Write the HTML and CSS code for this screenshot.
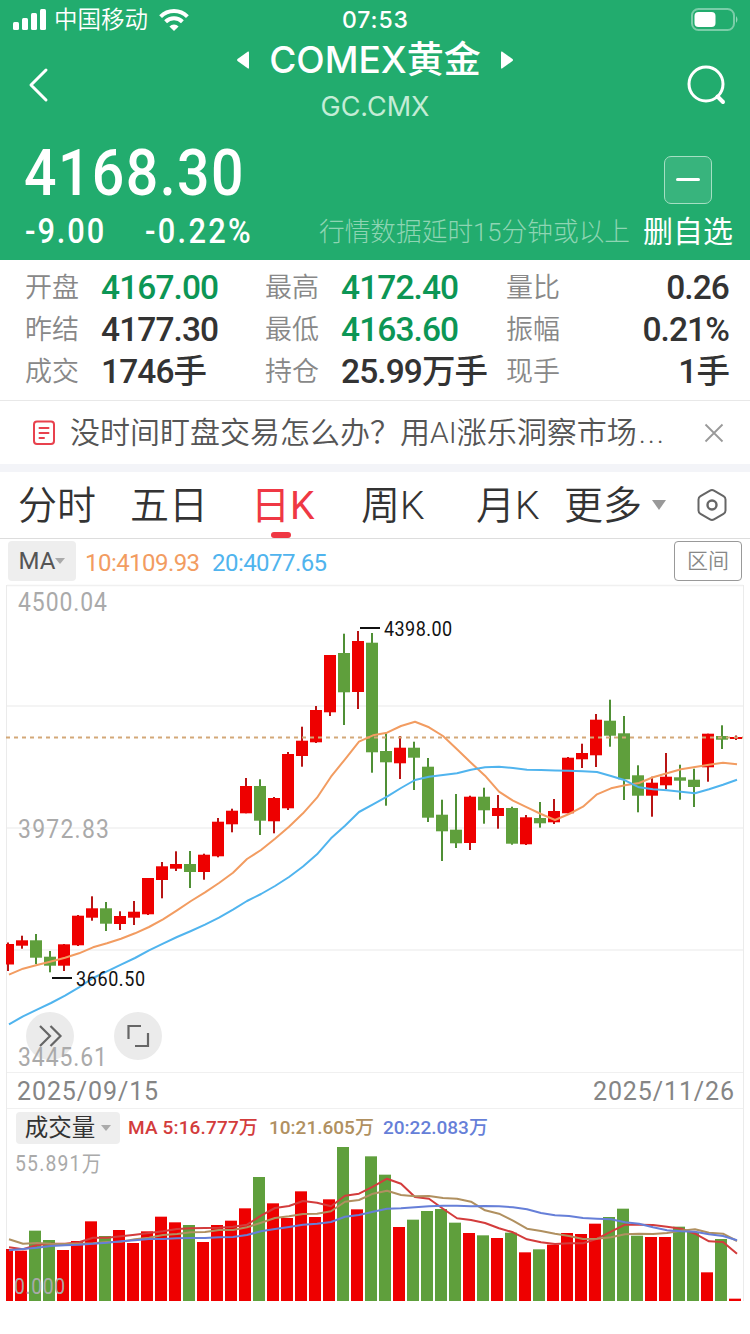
FILE: index.html
```html
<!DOCTYPE html>
<html lang="zh-CN">
<head>
    <meta charset="UTF-8">
    <meta name="viewport" content="width=device-width, initial-scale=1.0">
    <title>COMEX黄金 GC.CMX</title>
    <link rel="stylesheet" href="styles.css">
</head>
<body>
    <header class="header">
        <div class="status-bar">
            <svg class="signal" width="34" height="22" viewBox="0 0 34 22" fill="#fff">
                <rect x="0" y="14" width="6" height="8" rx="1.5"/>
                <rect x="9" y="10" width="6" height="12" rx="1.5"/>
                <rect x="18" y="5" width="6" height="17" rx="1.5"/>
                <rect x="27" y="1" width="6" height="21" rx="1.5"/>
            </svg>
            <span class="carrier">中国移动</span>
            <svg class="wifi" width="30" height="22" viewBox="0 0 30 22" fill="none" stroke="#fff" stroke-width="4">
                <path d="M1.6 7.6a19 19 0 0 1 26.8 0"/>
                <path d="M6.6 12.8a12 12 0 0 1 16.8 0"/>
                <path d="M15 22l-4.6-4.6a6.4 6.4 0 0 1 9.2 0z" fill="#fff" stroke="none"/>
            </svg>
            <span class="time">07:53</span>
            <svg class="battery" width="50" height="24" viewBox="0 0 50 24">
                <rect x="2" y="1" width="42" height="21" rx="6.5" fill="none" stroke="#fff" stroke-opacity=".4" stroke-width="2"/>
                <rect x="4.500" y="4" width="21" height="15" rx="4" fill="#fff"/>
                <path d="M46 8q3 3.500 0 7z" fill="#fff" fill-opacity=".5"/>
            </svg>
        </div>

        <div class="nav">
            <svg class="back" width="22" height="36" viewBox="0 0 22 36" fill="none" stroke="#fff" stroke-width="3" stroke-linecap="round" stroke-linejoin="round">
                <path d="M18 3L3 18l15 15"/>
            </svg>
            <div class="title">
                <div class="title-row">
                    <svg width="14" height="20" viewBox="0 0 14 20" fill="#fff"><path d="M12 1.500Q13 1 13 2.500v15q0 1.500-1 1L1.500 11Q.5 10 1.500 9z"/></svg>
                    <h1>COMEX黄金</h1>
                    <svg width="14" height="20" viewBox="0 0 14 20" fill="#fff"><path d="M2 1.500Q1 1 1 2.500v15q0 1.500 1 1L12.500 11q1-1 0-2z"/></svg>
                </div>
                <p class="code">GC.CMX</p>
            </div>
            <svg class="search" width="40" height="42" viewBox="0 0 40 42" fill="none" stroke="#fff" stroke-width="3" stroke-linecap="round">
                <circle cx="19" cy="20" r="17"/>
                <path d="M30.500 32.500l5.500 5.500" stroke-width="4"/>
            </svg>
        </div>

        <div class="price-row">
            <span class="price">4168.30</span>
            <button class="minus"></button>
        </div>
        <div class="change-row">
            <span class="change">-9.00</span>
            <span class="percent">-0.22%</span>
            <span class="delay">行情数据延时15分钟或以上</span>
            <span class="remove">删自选</span>
        </div>
    </header>

    <section class="stats">
        <span class="label">开盘</span><span class="value green">4167.00</span>
        <span class="label">最高</span><span class="value green">4172.40</span>
        <span class="label">量比</span><span class="value right">0.26</span>
        <span class="label">昨结</span><span class="value">4177.30</span>
        <span class="label">最低</span><span class="value green">4163.60</span>
        <span class="label">振幅</span><span class="value right">0.21%</span>
        <span class="label">成交</span><span class="value">1746手</span>
        <span class="label">持仓</span><span class="value">25.99万手</span>
        <span class="label">现手</span><span class="value right">1手</span>
    </section>

    <section class="news">
        <svg width="24" height="26" viewBox="0 0 24 26" fill="none" stroke="#e8414d" stroke-width="2" stroke-linecap="round">
            <rect x="2" y="1.500" width="20" height="22.500" rx="3"/>
            <path d="M7.500 8h9M7.500 13h9M7.500 18h4.500"/>
        </svg>
        <p>没时间盯盘交易怎么办？用AI涨乐洞察市场<span class="dots">...</span></p>
        <svg class="close" width="20" height="20" viewBox="0 0 20 20" stroke="#999" stroke-width="1.800"><path d="M1.500 1.500l17 17M18.500 1.500l-17 17"/></svg>
    </section>

    <nav class="tabs">
        <span>分时</span>
        <span>五日</span>
        <span class="active">日K</span>
        <span>周K</span>
        <span>月K</span>
        <span>更多</span>
        <i class="caret"></i>
        <svg width="30" height="34" viewBox="0 0 30 34" fill="none" stroke="#666" stroke-width="2" stroke-linejoin="round">
            <path d="M13 2.700q2-1.200 4 0l9.500 5.500q2 1.200 2 3.400v10.800q0 2.200-2 3.400L17 31.300q-2 1.200-4 0l-9.500-5.500q-2-1.200-2-3.400V11.600q0-2.200 2-3.400z"/>
            <circle cx="15" cy="17" r="4.500" stroke-width="2.400"/>
        </svg>
    </nav>

    <div class="indicator">
        <span class="chip">MA<i class="caret small"></i></span>
        <span class="ma10">10:4109.93</span>
        <span class="ma20">20:4077.65</span>
        <button class="range">区间</button>
    </div>

    <main class="chart">
        <svg id="kline" width="736" height="487" viewBox="7 585 736 487"></svg>
        <div class="dates"><span>2025/09/15</span><span>2025/11/26</span></div>
        <div class="vol-head">
            <span class="chip">成交量<i class="caret small"></i></span>
            <span class="v5">MA 5:16.777万</span>
            <span class="v10">10:21.605万</span>
            <span class="v20">20:22.083万</span>
        </div>
        <svg id="volume" width="736" height="157" viewBox="7 1144 736 157"></svg>
    </main>

    <script src="chart.js"></script>
</body>
</html>
```

FILE: styles.css
```css
* {
    box-sizing: border-box;
}
body {
    margin: 0;
    width: 750px;
    height: 1334px;
    overflow: hidden;
    background: #fff;
    color: #333;
    font-family: Roboto, "Noto Sans CJK SC", sans-serif;
}
h1, p {
    margin: 0;
    font-weight: 400;
}
button {
    padding: 0;
    font-family: inherit;
}
svg {
    display: block;
    flex: none;
}
.header {
    height: 260px;
    background: #22ac6e;
    color: #fff;
}
.status-bar {
    display: flex;
    align-items: center;
    height: 40px;
    padding: 0 10px 0 13px;
}
.signal {
    margin-top: -2px;
}
.carrier {
    width: 94px;
    margin-left: 7px;
    font-size: 23.5px;
    font-weight: 350;
    line-height: 38px;
    white-space: nowrap;
}
.wifi {
    margin-left: 11px;
}
.time {
    margin-left: 153px;
    font-family: Inter, sans-serif;
    font-size: 23px;
    font-weight: 500;
    letter-spacing: 0.9px;
}
.battery {
    margin-left: auto;
}
.nav {
    display: flex;
    align-items: center;
    justify-content: space-between;
    height: 90px;
    padding: 0 23px 0 28px;
}
.title {
    display: flex;
    flex-direction: column;
    align-items: center;
    margin-left: 13px;
}
.title-row {
    display: flex;
    align-items: center;
    gap: 19px;
    height: 44px;
    margin-top: -4px;
}
.title-row h1 {
    font-family: Inter, "Noto Sans CJK SC", sans-serif;
    font-size: 37px;
    font-weight: 500;
    line-height: 44px;
}
.code {
    height: 46px;
    font-family: Inter, sans-serif;
    font-size: 27px;
    line-height: 50px;
    color: #c4ecd6;
}
.price-row {
    display: flex;
    align-items: center;
    justify-content: space-between;
    height: 86px;
    padding: 0 38px 0 24px;
}
.price {
    font-size: 65px;
    font-weight: 500;
    letter-spacing: 1.6px;
    transform: scaleX(0.88);
    transform-origin: left;
}
.minus {
    display: flex;
    align-items: center;
    justify-content: center;
    width: 48px;
    height: 48px;
    margin-top: 13px;
    background: #38b47d;
    border: 1px solid #a5dfc3;
    border-radius: 7px;
}
.minus::before {
    content: "";
    width: 24px;
    height: 3px;
    border-radius: 2px;
    background: #fff;
}
.change-row {
    display: flex;
    align-items: center;
    height: 32px;
    padding-left: 25px;
    white-space: nowrap;
}
.change, .percent {
    width: 120px;
    font-size: 35px;
    font-weight: 500;
    letter-spacing: 2.2px;
    line-height: 32px;
    transform: scaleX(0.88);
    transform-origin: left;
}
.percent {
    width: 174px;
    letter-spacing: 2.6px;
}
.delay {
    width: 324px;
    font-size: 25.7px;
    font-weight: 300;
    line-height: 30px;
    color: #8ed5b3;
}
.remove {
    font-size: 30px;
    line-height: 32px;
}
.stats {
    display: grid;
    grid-template-columns: 76px 164px 76px 165px 76px 1fr;
    grid-auto-rows: 42px;
    align-items: center;
    height: 141px;
    padding: 7px 21px 0 25px;
    border-bottom: 1px solid #e8e8e8;
    line-height: 42px;
    white-space: nowrap;
}
.label {
    font-size: 27px;
    font-weight: 350;
    line-height: 40px;
    color: #888;
}
.value {
    font-size: 33.5px;
    font-weight: 500;
    letter-spacing: -0.9px;
}
.green {
    color: #0c9655;
}
.right {
    text-align: right;
}
.news {
    display: flex;
    align-items: center;
    height: 71px;
    padding: 0 26px 0 32px;
    border-bottom: 8px solid #f3f4f8;
}
.news p {
    margin-left: 14px;
    font-size: 30px;
    font-weight: 350;
    line-height: 60px;
    color: #555;
    white-space: nowrap;
}
.dots {
    margin-left: 2px;
    letter-spacing: 1.8px;
}
.close {
    margin-left: auto;
}
.tabs {
    display: grid;
    grid-template-columns: 112px 121px 110px 115px 88px 88px 45px 30px;
    align-items: center;
    height: 67px;
    padding-left: 18px;
    border-bottom: 1px solid #ddd;
    font-size: 39px;
    font-weight: 350;
    line-height: 66px;
    white-space: nowrap;
}
.tabs span {
    padding-top: 1px;
    height: 66px;
}
.tabs .active {
    position: relative;
    color: #ef3844;
    font-weight: 400;
}
.tabs .active::after {
    content: "";
    position: absolute;
    left: 20px;
    bottom: 0;
    width: 20px;
    height: 6px;
    border-radius: 3px;
    background: #ef3844;
}
.caret {
    width: 0;
    height: 0;
    border: 7.500px solid transparent;
    border-top: 10px solid #999;
    border-bottom: 0;
}
.caret.small {
    border-width: 6px 5px 0;
    border-top-color: #aaa;
}
.indicator {
    display: flex;
    align-items: center;
    height: 45px;
    padding: 0 8px 1px;
    font-size: 24px;
    white-space: nowrap;
}
.chip {
    display: flex;
    align-items: center;
    justify-content: center;
    width: 68px;
    height: 40px;
    border-radius: 4px;
    background: #eee;
    color: #555;
}
.ma10, .ma20 {
    letter-spacing: -0.55px;
    line-height: 40px;
    padding-top: 3px;
}
.ma10 {
    width: 127px;
    margin-left: 9px;
    color: #f29c61;
}
.ma20 {
    color: #50b4ee;
}
.range {
    width: 68px;
    height: 40px;
    margin-left: auto;
    background: #fff;
    border: 1px solid #999;
    border-radius: 4px;
    color: #888;
    font-size: 21px;
    font-weight: 350;
    line-height: 38px;
}
.chart {
    width: 738px;
    margin: 1px 6px 0;
    border: solid #ebebeb;
    border-width: 0 1px;
}
.chart svg {
    overflow: visible;
}
.dates {
    display: flex;
    align-items: center;
    justify-content: space-between;
    height: 37px;
    padding: 2px 8px 0 10px;
    border: solid #f0f0f0;
    border-width: 1px 0;
    font-size: 25px;
    letter-spacing: 0.9px;
    color: #858585;
}
.vol-head {
    display: flex;
    align-items: center;
    height: 35px;
    padding: 3px 0 0 9px;
    font-size: 19px;
    font-weight: 500;
    line-height: 32px;
    white-space: nowrap;
}
.vol-head .chip {
    width: 104px;
    height: 32px;
    gap: 6px;
    font-size: 23.5px;
    font-weight: 400;
    line-height: 29px;
    color: #333;
}
.v5 {
    width: 141px;
    margin-left: 8px;
    color: #d33c3c;
    letter-spacing: 0.15px;
}
.v10 {
    width: 114px;
    color: #b09060;
}
.v20 {
    color: #667fd8;
}
.axis {
    fill: #aaa;
}
.mark {
    fill: #111;
}
```

FILE: chart.js
```js
const RED = "#ee0000";
const GREEN = "#5f9f3c";
const STEP = 14;

// [body top, body bottom, high, low, up]
const candles = [
    [944,964.5,942.5,971,1],[940.3,945.7,935.7,948.7,1],[940.3,957.7,934,964,0],[956.7,965.7,951,972.3,0],
    [944.3,965.7,944,971,1],[915.7,945.3,915,946,1],[908.3,917.7,896.3,920.7,1],[908.3,923.7,902,931,0],
    [916,924,911.3,930,1],[911.7,917.7,901,925,1],[878,914.3,878,915,1],[866.3,880,862,898.3,1],
    [864,868.7,851.3,871,1],[864,872,851,888,0],[854.7,872,853.7,879.7,1],[821.7,856.3,818,857.3,1],
    [810.7,824.3,808.7,832.3,1],[786,813.3,778,813.3,1],[786,820.7,779.3,835,0],[798,821.3,797,833.3,1],
    [754,808.3,752,810,1],[740.7,756,726.7,766.7,1],[710,742.3,706,743,1],[655,712.3,655,716,1],
    [653,692.3,633.7,725,0],[641,692,631,709,1],[642.7,752.3,633,772.7,0],[751,762.3,733.3,805.7,0],
    [747.7,763.3,736,779,1],[747.7,757.7,741.7,790,0],[766.7,817.7,758,822,0],[814.7,831.3,799.7,861,0],
    [829.7,843.3,794,848,0],[796.7,843,795.7,850,1],[796.7,810.3,787.7,823.7,0],[808,816,795,828.7,1],
    [808,843.7,806.7,844.7,0],[817.3,844.3,815,845,1],[818,823.3,802,827.7,0],[811,822.3,799,824,1],
    [757.7,813.3,757,813.3,1],[753,759.3,743.7,768,1],[719.7,755.3,714,767,1],[720.7,735.7,699.7,746.7,0],
    [733.3,779.3,716,800,0],[775.3,795.7,765.3,812.3,0],[782.7,795.7,776.7,816.7,1],[776.7,785.3,753,789.3,1],
    [777.3,780.7,764.7,799.7,0],[779.7,787,768.7,807,0],[733.7,767.3,733.7,781.7,1],[736,739.7,725.3,749,0],
    [737,739,735.5,740,1]
];
const ma10 = [974.7,968.7,965,961.5,957.7,953.3,947.3,943.3,938.7,933.3,927,919.3,910.3,901,892.3,883,872.7,859,850,838.7,826.7,813.3,797.7,776.7,759.3,741.7,735.3,732.7,726,721.7,727.3,736,749.3,762.7,775.7,791.7,800.7,807.3,814,820,814,806.7,794.3,788.3,785.3,783,777.3,773.3,769.3,767,764.7,762.7,764.3];
const ma20 = [1024.3,1016.3,1009.7,1003,995.7,987.3,978,971.3,964.7,958,950.3,943.7,937,931,924.7,917.7,909.7,901,894,886,877,866.5,854.3,838.3,825.7,812,804.3,796.7,788,780,776.7,775,773.3,769.7,767.3,766.7,768,769.7,770,770.5,770.7,771.3,772,776,780.3,787.3,789.3,790.3,791.7,793.3,789.3,784.7,779.7];

// heights of the volume bars and of their averages, in thirds of a pixel under the top line
const volTop = [537,542,482,510,540,513,454,498,480,519,484,440,457,465,516,465,452,415,321,400,444,364,441,388,231,418,259,314,471,449,423,417,458,489,496,504,488,547,538,524,489,492,461,441,416,497,501,501,470,486,607,507,686];
const vol5 = [532,538,525,521,521,517,503,503,499,494,489,484,477,475,474,473,470,464,437,414,408,393,398,409,377,371,350,326,341,381,386,416,445,450,459,475,487,508,517,522,520,520,506,485,464,464,465,470,476,491,514,516,551];
const vol10 = [508,521,519,521,522,521,520,516,515,508,503,495,492,487,486,480,480,472,458,444,439,432,431,424,395,390,371,362,375,379,378,384,386,395,421,431,452,476,483,491,498,507,506,502,493,491,492,489,482,478,488,491,513];
const vol20 = [541,537,533,528,526,524,521,518,514,511,507,507,505,504,504,502,501,495,484,477,471,464,461,456,440,435,425,416,415,412,409,407,407,409,408,409,412,418,429,436,438,444,446,448,457,461,472,481,484,485,493,498,511];
const volY = v => 1070 + v / 3;

function rect(x, y, w, h, fill) {
    const left = Math.max(6, x);
    return `<rect x="${left}" y="${y}" width="${x + w - left}" height="${h}" fill="${fill}"/>`;
}

function line(values, color) {
    const points = values.map((y, i) => `${9 + i * STEP},${y.toFixed(1)}`).join(" ");
    return `<polyline points="${points}" fill="none" stroke="${color}" stroke-width="2" stroke-linejoin="round"/>`;
}

// narrow digits: drawn at 90% width and spaced out to fill the given length
function text(x, y, width, size, cls, value) {
    return `<text transform="translate(${x} ${y}) scale(.9 1)" textLength="${(width / 0.9).toFixed(1)}" font-size="${size}" class="${cls}">${value}</text>`;
}

function drawKline() {
    let out = "";
    [585.5, 706, 828, 950].forEach(y => {
        out += `<path d="M7 ${y}H743" stroke="#f0f0f0" stroke-width="1.5"/>`;
    });
    out += text(18, 838, 91, 25.5, "axis", "3972.83");
    candles.forEach(([top, bottom, high, low, up], i) => {
        const x = 8 + i * STEP;
        out += rect(x - 1, high, 2, low - high, up ? "#b81414" : "#4f8f35");
        out += rect(x - 6, top, 12, bottom - top, up ? RED : GREEN);
    });
    out += `<path d="M6 737.5H743" stroke="#d3a878" stroke-width="2" stroke-dasharray="4 4"/>`;
    out += line(ma10, "#f29c61") + line(ma20, "#50b4ee");
    out += `<path d="M360 628H380M52 978H72" stroke="#111" stroke-width="2"/>`;
    out += text(384, 636, 68, 20, "mark", "4398.00");
    out += text(76, 986, 69, 20, "mark", "3660.50");
    out += `<circle cx="50" cy="1036" r="24" fill="#ebebeb"/><circle cx="138" cy="1036" r="24" fill="#ebebeb"/>`;
    out += `<g fill="none" stroke="#666" stroke-width="2.2"><path d="M40 1026l10 10-10 10M50.500 1026l10 10-10 10"/><path d="M128.500 1039v-13H141M148 1033v13H135"/></g>`;
    out += text(18, 611, 89, 25.5, "axis", "4500.04");
    out += text(18, 1066, 89, 25.5, "axis", "3445.61");
    document.getElementById("kline").innerHTML = out;
}

function drawVolume() {
    let out = "";
    volTop.forEach((v, i) => {
        out += rect(1 + i * STEP, volY(v), 12, 1301 - volY(v), candles[i][4] ? RED : GREEN);
    });
    out += line(vol5.map(volY), "#d33c3c") + line(vol10.map(volY), "#b09060") + line(vol20.map(volY), "#667fd8");
    out += text(15, 1171, 86, 21.5, "axis", "55.891万");
    out += text(14, 1294, 51, 21.5, "axis", "0.000");
    document.getElementById("volume").innerHTML = out;
}

drawKline();
drawVolume();
```
